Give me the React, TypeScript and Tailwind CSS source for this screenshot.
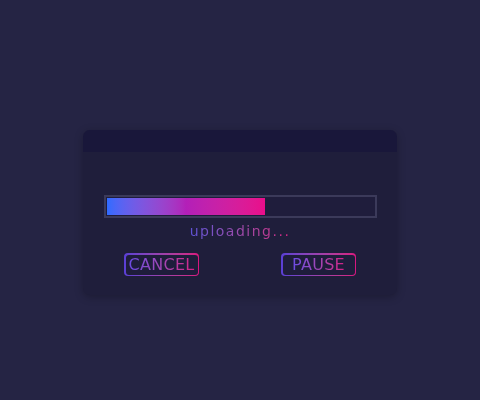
import React from 'react';

const GradientButton: React.FC<{ label: string }> = ({ label }) => (
  <div className="rounded-[4px] bg-linear-to-r from-[#5a3fd6] to-[#d8157f] p-[1.5px]">
    <div className="flex h-[20px] w-[72px] items-center justify-center rounded-[3px] bg-[#1e1d3b]">
      <span className="bg-linear-to-r from-[#6a4be6] to-[#d41985] bg-clip-text text-[16px] leading-none tracking-[0.3px] text-transparent">
        {label}
      </span>
    </div>
  </div>
);

const App: React.FC = () => {
  return (
    <div
      className="flex h-[400px] w-[480px] items-start justify-center bg-[#252444] pt-[130px]"
      style={{ fontFamily: '"DejaVu Sans", "Open Sans", sans-serif' }}
    >
      <div className="h-[165px] w-[314px] overflow-hidden rounded-[7px] bg-[#1f1e3b] shadow-[0_2px_8px_rgba(0,0,0,0.25)]">
        {/* Header */}
        <div className="h-[22px] bg-[#19173a]" />

        {/* Body */}
        <div className="flex flex-col items-center pt-[43px]">
          <div className="h-[23px] w-[273px] border-2 border-[#3b3a5a] bg-[#1f1d3c] p-px">
            <div className="h-full w-[158px] bg-linear-to-r from-[#2e6bff] via-[#b31fb8] to-[#ea0d8a]" />
          </div>

          <div className="mt-[4px] bg-linear-to-r from-[#5e52d6] to-[#d0207f] bg-clip-text text-[14px] leading-[18px] tracking-[1.5px] text-transparent">
            uploading...
          </div>

          <div className="mt-[13px] flex w-[232px] justify-between">
            <GradientButton label="CANCEL" />
            <GradientButton label="PAUSE" />
          </div>
        </div>
      </div>
    </div>
  );
};

export default App;
